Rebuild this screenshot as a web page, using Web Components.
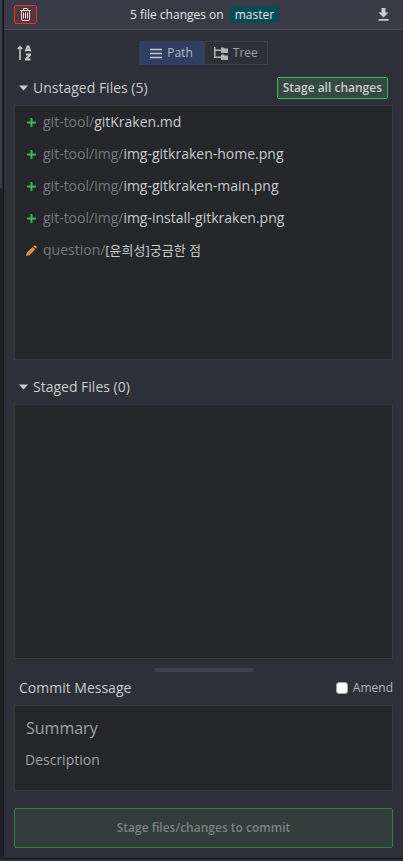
<!DOCTYPE html>
<html lang="en">
<head>
<meta charset="utf-8">
<meta name="viewport" content="width=device-width, initial-scale=1">
<title>Commit panel</title>
<style>
  :root {
    --panel: #2d3038;
    --field: #24262a;
    --line: #36383c;
    --text: #c9cacb;
    --muted: #77797c;
    --green: #3cb356;
  }
  body {
    margin: 0;
    background: #1b1d21;
    color: var(--text);
    font: 14px/20px "Open Sans", "Noto Sans", "Noto Sans CJK KR", sans-serif;
  }
</style>
</head>
<body>
<commit-app></commit-app>

<script>
function define(name, html, setup) {
  const template = document.createElement('template');
  template.innerHTML = html;
  customElements.define(name, class extends HTMLElement {
    constructor() {
      super();
      this.attachShadow({ mode: 'open' }).append(template.content.cloneNode(true));
    }
    connectedCallback() {
      if (setup) setup(this, this.shadowRoot);
    }
  });
}

define('panel-header', `
<style>
  :host { display: grid; grid-template-columns: 1fr auto 1fr; align-items: center; box-sizing: border-box;
    height: 30px; padding: 0 10px; background: #383b46; border-bottom: 1px solid #484b54; font-size: 12px; color: #e4e5e7; }
  button { display: flex; padding: 0; border: 0; background: none; color: inherit; }
  .discard { box-sizing: border-box; width: 23px; height: 19px; align-items: center; justify-content: center;
    border: 1px solid #e0363a; border-radius: 2px; background: #58363f; }
  .download { justify-self: end; margin-right: 4px; color: #c9cacc; }
  p { margin: 0; padding-left: 2px; display: flex; align-items: center; gap: 6px; }
  .branch { padding: 0 5px; line-height: 17px; border-radius: 3px; background: #074b56; }
</style>
<button class="discard" aria-label="Discard all changes">
  <svg width="11" height="13" viewBox="0 0 11 13" fill="none" stroke="#e6dcdc"><path d="M0 2.5h11M3.5 2V.5h4V2M1.5 3v8.5q0 1 1 1h6q1 0 1-1V3M3.5 4.5v6M5.500 4.500v6M7.500 4.500v6"/></svg>
</button>
<p><slot></slot><span class="branch"><slot name="branch"></slot></span></p>
<button class="download" aria-label="Download">
  <svg width="11" height="13" viewBox="0 0 11 13" fill="currentColor"><path d="M3.500 0h4v4.500H10.500L5.500 9.500.500 4.500h3zM.500 11h10v1.700H.500z"/></svg>
</button>`);

define('view-toolbar', `
<style>
  :host { display: grid; grid-template-columns: 1fr auto 1fr; align-items: center; padding: 11px 10px 6px; }
  .sort { display: flex; width: 16px; padding: 0; margin-left: 3px; border: 0; background: none; color: var(--text); }
  .views { display: flex; }
  .views button { display: flex; align-items: center; gap: 5px; box-sizing: border-box; height: 24px; padding: 0 9px;
    border: 1px solid #3d4047; background: none; color: #999b9e; font: inherit; font-size: 12px; }
  .views button[aria-pressed=true] { padding: 0 10px; border-color: #303f61; background: #303f61; color: #b6bac3; }
  .views button[aria-pressed=false] { gap: 4px; }
</style>
<button class="sort" aria-label="Sort ascending">
  <svg width="15" height="16" viewBox="0 0 15 16" fill="none" stroke="currentColor"><path d="M3 15V2M.7 4 3 1.500 5.300 4" stroke-width="1.500"/><path d="M8.500 6.500 10.500 1.500h1l2 5M9.500 5h3M9 9.500h4v.8L9 13.600v.9h4.500" stroke-width="1.800"/></svg>
</button>
<div class="views">
  <button aria-pressed="true"><svg width="12" height="11" viewBox="0 0 12 11" fill="#c3c7cf"><path d="M0 .800h12v1.400H0zM0 4.800h12v1.400H0zM0 8.800h12v1.400H0z"/></svg>Path</button>
  <button aria-pressed="false"><svg width="15" height="13" viewBox="0 0 15 13" fill="#b0b2b4"><path d="M0 0h1.500v2.500H7V.500h3l.7 1H14V6H7V4H1.500v5.500H7V7.500h3l.7 1H14V13H7v-2H0z"/></svg>Tree</button>
</div>`);

define('file-section', `
<style>
  :host { display: flex; flex: 1; flex-direction: column; min-height: 0; }
  header { display: flex; align-items: center; justify-content: space-between; height: 34px; padding: 0 5px; }
  h2 { margin: 0; font: inherit; }
  .fold { display: flex; align-items: center; gap: 4px; padding: 0; border: 0; background: none; color: inherit; font: inherit; }
  .list { flex: 1; min-height: 0; overflow: hidden; border: 1px solid var(--line); background: var(--field); }
</style>
<header>
  <h2><button class="fold" aria-expanded="true"><svg width="10" height="6" viewBox="0 0 10 6" fill="currentColor"><path d="M0 .500h9L4.500 5.500z"/></svg><slot name="title"></slot></button></h2>
  <slot name="action"></slot>
</header>
<div class="list" role="list"><slot></slot></div>`);

define('stage-button', `
<style>
  :host { display: block; }
  button { display: block; box-sizing: border-box; height: 22px; padding: 0 5px; border: 1px solid var(--green); border-radius: 2px;
    background: #344941; color: #cacecc; font: inherit; font-size: 12px; font-weight: 600; line-height: 20px; }
</style>
<button><slot></slot></button>`);

define('file-row', `
<style>
  :host { display: flex; align-items: center; gap: 6px; height: 32px; padding-left: 11px; white-space: nowrap; }
  svg { display: none; flex: none; }
  :host([status=added]) .added, :host([status=modified]) .modified { display: block; }
  .folder { color: var(--muted); }
  :host(:lang(ko)) .name { font-size: 13px; }
</style>
<svg class="added" width="11" height="11" viewBox="0 0 11 11" fill="var(--green)"><path d="M4.500 1h2v3.500H10v2H6.500V10h-2V6.500H1v-2h3.500z"/></svg>
<svg class="modified" width="11" height="11" viewBox="0 0 11 11" fill="#e18d3d"><path d="M0 11 .8 7.400 6.600 1.900 9.200 4.500 3.600 10.200zM7.300 1.300 8.300.4Q8.800 0 9.300.4L10.700 1.800Q11.100 2.300 10.700 2.800L9.900 3.800z"/></svg>
<span><span class="folder"></span><span class="name"><slot></slot></span></span>`,
(host, root) => {
  host.setAttribute('role', 'listitem');
  root.querySelector('.folder').textContent = host.getAttribute('folder');
});

define('resize-handle', `
<style>
  :host { display: block; width: 100px; height: 4px; margin: 9px auto 0; border-radius: 2px; background: #3e4149; }
</style>`);

define('commit-form', `
<style>
  :host { display: block; }
  header { display: flex; align-items: center; justify-content: space-between; box-sizing: border-box; height: 33px; padding: 0 0 2px 5px; }
  h2 { margin: 0; font: inherit; }
  label { display: flex; align-items: center; gap: 5px; font-size: 12px; line-height: 16px; color: #b4b6b8; }
  input[type=checkbox] { appearance: none; box-sizing: border-box; width: 12px; height: 12px; margin: 0;
    border: 1px solid #a5a5a7; border-radius: 3px; background: #fff; }
  .message { display: flex; flex-direction: column; box-sizing: border-box; height: 86px; padding: 6px 10px;
    border: 1px solid var(--line); background: var(--field); }
  .message input, textarea { box-sizing: border-box; width: 100%; margin: 0; padding: 0; border: 0; outline: 0; background: none;
    color: inherit; font: inherit; resize: none; }
  .message input { height: 32px; padding-left: 1px; font-size: 16px; }
  textarea { height: 40px; padding-top: 6px; overflow: hidden; }
  ::placeholder { color: #a0a2a4; opacity: 1; }
  .commit { display: block; width: 100%; height: 40px; margin: 17px 0 10px; padding: 0; border: 1px solid #337c47; border-radius: 2px;
    background: #313c3b; color: #7b8382; font: inherit; font-size: 12px; font-weight: 600; }
</style>
<header>
  <h2>Commit Message</h2>
  <label><input type="checkbox">Amend</label>
</header>
<div class="message">
  <input type="text" placeholder="Summary" aria-label="Summary">
  <textarea placeholder="Description" aria-label="Description"></textarea>
</div>
<button class="commit" disabled>Stage files/changes to commit</button>`);

define('commit-app', `
<style>
  :host { display: flex; box-sizing: border-box; height: 100vh; min-height: 600px; border-bottom: 2px solid #2d3038; }
  .gutter { flex: none; width: 3px; border-right: 1px solid #15171a; background: #1f2125; }
  .thumb { height: 22%; width: 2px; background: #363c48; border-radius: 0 0 2px 0; }
  main { display: flex; flex: 1; flex-direction: column; min-width: 0; background: var(--panel); border-bottom: 1px solid #131518; }
  .body { display: flex; flex: 1; flex-direction: column; min-height: 0; padding: 0 10px; }
  .staged { margin-top: 10px; }
</style>
<div class="gutter"><div class="thumb"></div></div>
<main>
  <panel-header>5 file changes on<span slot="branch">master</span></panel-header>
  <view-toolbar></view-toolbar>
  <div class="body">
    <file-section>
      <span slot="title">Unstaged Files (5)</span>
      <stage-button slot="action">Stage all changes</stage-button>
      <file-row status="added" folder="git-tool/">gitKraken.md</file-row>
      <file-row status="added" folder="git-tool/img/">img-gitkraken-home.png</file-row>
      <file-row status="added" folder="git-tool/img/">img-gitkraken-main.png</file-row>
      <file-row status="added" folder="git-tool/img/">img-install-gitkraken.png</file-row>
      <file-row status="modified" folder="question/" lang="ko">[윤희성]궁금한 점</file-row>
    </file-section>
    <file-section class="staged"><span slot="title">Staged Files (0)</span></file-section>
    <resize-handle></resize-handle>
    <commit-form></commit-form>
  </div>
</main>`);
</script>
</body>
</html>
